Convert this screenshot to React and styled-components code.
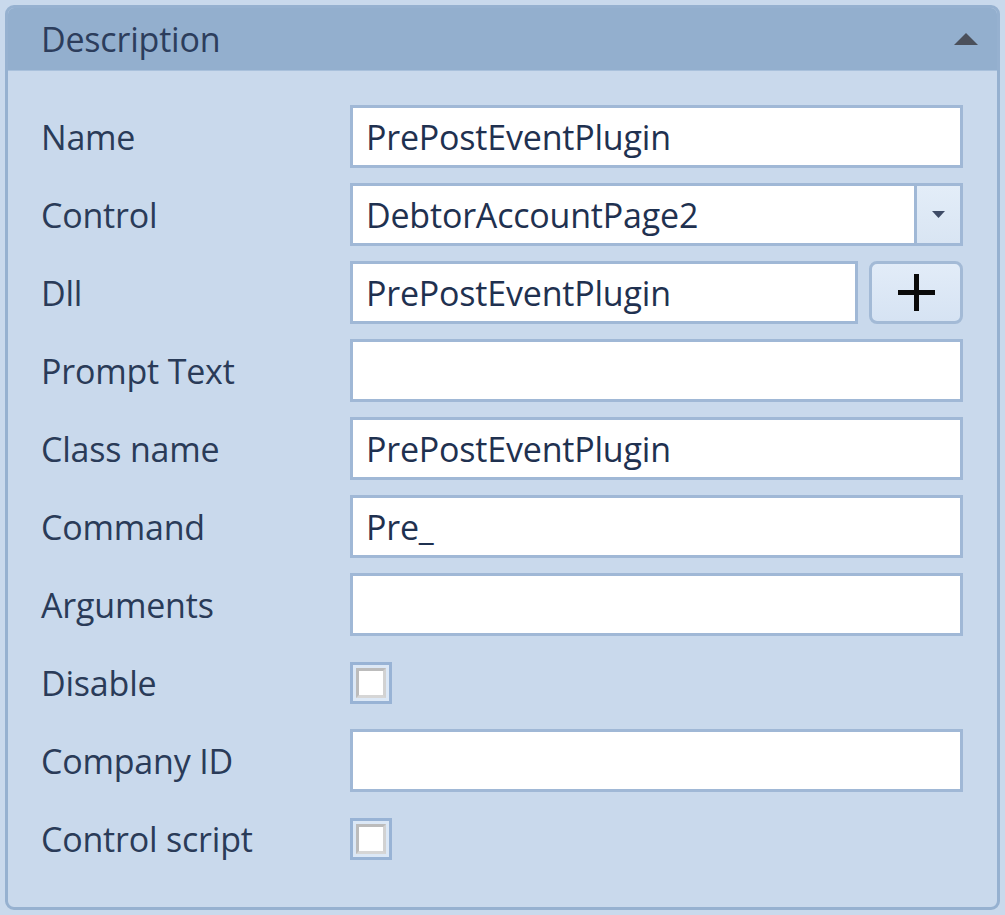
import React from "react";
import styled, { createGlobalStyle } from "styled-components";

const Global = createGlobalStyle`
  html, body { margin: 0; padding: 0; background: #c9d9ec; }
  body { font-family: "Open Sans", "Noto Sans", sans-serif; }
`;

const Page = styled.div`
  padding: 5px 5px 0 5px;
  width: 1005px;
  height: 915px;
  box-sizing: border-box;
`;

const Panel = styled.section`
  width: 995px;
  height: 905px;
  box-sizing: border-box;
  border: 3px solid #96b1d0;
  border-radius: 9px;
  background: #c9d9ec;
  overflow: hidden;
  display: flex;
  flex-direction: column;
`;

const Header = styled.header`
  height: 62px;
  background: #93afce;
  border-bottom: 1px solid #a9c1dc;
  display: flex;
  align-items: center;
  justify-content: space-between;
  padding: 0 19px 0 33px;
  flex-shrink: 0;
`;

const Title = styled.h2`
  margin: 0;
  font-weight: 400;
  font-size: 34px;
  color: #2c3d5c;
  letter-spacing: -0.2px;
`;

const Body = styled.div`
  padding: 34px 34px 0 33px;
  display: grid;
  grid-template-columns: 309px 613px;
  grid-auto-rows: 63px;
  row-gap: 15px;
`;

const Label = styled.label`
  display: flex;
  align-items: center;
  font-size: 34px;
  color: #2a3b58;
  letter-spacing: -0.2px;
`;

const Field = styled.div`
  display: flex;
  align-items: center;
  gap: 11px;
`;

const Input = styled.div`
  flex: 1;
  height: 63px;
  box-sizing: border-box;
  border: 3px solid #a0b8d6;
  background: #ffffff;
  display: flex;
  align-items: center;
  padding-left: 13px;
  font-size: 34px;
  color: #1f3150;
  letter-spacing: -0.2px;
  overflow: hidden;
  white-space: nowrap;
`;

const Combo = styled.div`
  flex: 1;
  height: 63px;
  box-sizing: border-box;
  border: 3px solid #a0b8d6;
  display: flex;
  background: #ffffff;
`;

const ComboText = styled.div`
  flex: 1;
  display: flex;
  align-items: center;
  padding-left: 13px;
  font-size: 34px;
  color: #1f3150;
  letter-spacing: -0.2px;
`;

const ComboButton = styled.div`
  width: 43px;
  border-left: 3px solid #a0b8d6;
  background: linear-gradient(#e3edf8, #d9e5f3);
  display: flex;
  align-items: center;
  justify-content: center;
`;

const PlusButton = styled.button`
  width: 94px;
  height: 63px;
  box-sizing: border-box;
  border: 3px solid #a3bad6;
  border-radius: 8px;
  background: linear-gradient(#e2ecf8, #d6e3f3);
  display: flex;
  align-items: center;
  justify-content: center;
  padding: 0;
`;

const CheckOuter = styled.div`
  width: 42px;
  height: 42px;
  box-sizing: border-box;
  border: 3px solid #98b3d5;
  background: #dce8f6;
  padding: 3px;
`;

const CheckInner = styled.div`
  width: 100%;
  height: 100%;
  box-sizing: border-box;
  border: 3px solid #bcbcbc;
  border-right-color: #d2d2d2;
  border-bottom-color: #d6d6d6;
  background: #ffffff;
`;

const Arrow = ({ w, h, color, up }) => (
  <svg width={w} height={h} viewBox={`0 0 ${w} ${h}`}>
    <polygon
      points={up ? `0,${h} ${w / 2},0 ${w},${h}` : `0,0 ${w},0 ${w / 2},${h}`}
      fill={color}
    />
  </svg>
);

const rows = [
  { label: "Name", type: "text", value: "PrePostEventPlugin" },
  { label: "Control", type: "combo", value: "DebtorAccountPage2" },
  { label: "Dll", type: "plus", value: "PrePostEventPlugin" },
  { label: "Prompt Text", type: "text", value: "" },
  { label: "Class name", type: "text", value: "PrePostEventPlugin" },
  { label: "Command", type: "text", value: "Pre_" },
  { label: "Arguments", type: "text", value: "" },
  { label: "Disable", type: "check" },
  { label: "Company ID", type: "text", value: "" },
  { label: "Control script", type: "check" },
];

const renderField = (r) => {
  if (r.type === "combo")
    return (
      <Combo>
        <ComboText>{r.value}</ComboText>
        <ComboButton>
          <Arrow w={13} h={7} color="#3e4b66" />
        </ComboButton>
      </Combo>
    );
  if (r.type === "plus")
    return (
      <>
        <Input>{r.value}</Input>
        <PlusButton>
          <svg width="37" height="37" viewBox="0 0 37 37">
            <rect x="0" y="16" width="37" height="5" fill="#0a0a0a" />
            <rect x="16" y="0" width="5" height="37" fill="#0a0a0a" />
          </svg>
        </PlusButton>
      </>
    );
  if (r.type === "check")
    return (
      <CheckOuter>
        <CheckInner />
      </CheckOuter>
    );
  return <Input>{r.value}</Input>;
};

export default function App() {
  return (
    <Page>
      <Global />
      <Panel>
        <Header>
          <Title>Description</Title>
          <Arrow w={24} h={12} color="#4b505b" up />
        </Header>
        <Body>
          {rows.map((r) => (
            <React.Fragment key={r.label}>
              <Label>{r.label}</Label>
              <Field>{renderField(r)}</Field>
            </React.Fragment>
          ))}
        </Body>
      </Panel>
    </Page>
  );
}
